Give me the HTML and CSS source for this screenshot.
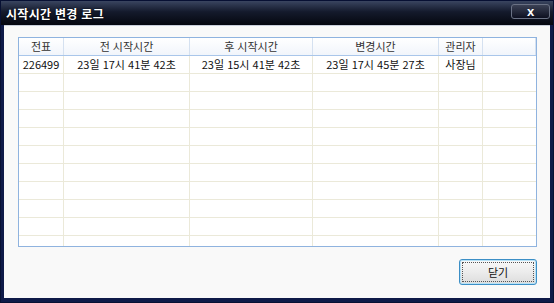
FILE: index.html
```html
<!DOCTYPE html>
<html lang="ko">
<head>
    <meta charset="UTF-8">
    <title>시작시간 변경 로그</title>
    <link rel="stylesheet" href="styles.css">
</head>
<body>
    <div class="window">
        <div class="titlebar">
            <span class="title">시작시간 변경 로그</span>
            <button class="close-btn">x</button>
        </div>

        <div class="client">
            <div class="grid">
                <div class="row head">
                    <div class="cell">전표</div>
                    <div class="cell">전 시작시간</div>
                    <div class="cell">후 시작시간</div>
                    <div class="cell">변경시간</div>
                    <div class="cell">관리자</div>
                    <div class="cell"></div>
                </div>
                <div class="row">
                    <div class="cell">226499</div>
                    <div class="cell">23일 17시 41분 42초</div>
                    <div class="cell">23일 15시 41분 42초</div>
                    <div class="cell">23일 17시 45분 27초</div>
                    <div class="cell">사장님</div>
                    <div class="cell"></div>
                </div>
                <div class="row"><div class="cell"></div><div class="cell"></div><div class="cell"></div><div class="cell"></div><div class="cell"></div><div class="cell"></div></div>
                <div class="row"><div class="cell"></div><div class="cell"></div><div class="cell"></div><div class="cell"></div><div class="cell"></div><div class="cell"></div></div>
                <div class="row"><div class="cell"></div><div class="cell"></div><div class="cell"></div><div class="cell"></div><div class="cell"></div><div class="cell"></div></div>
                <div class="row"><div class="cell"></div><div class="cell"></div><div class="cell"></div><div class="cell"></div><div class="cell"></div><div class="cell"></div></div>
                <div class="row"><div class="cell"></div><div class="cell"></div><div class="cell"></div><div class="cell"></div><div class="cell"></div><div class="cell"></div></div>
                <div class="row"><div class="cell"></div><div class="cell"></div><div class="cell"></div><div class="cell"></div><div class="cell"></div><div class="cell"></div></div>
                <div class="row"><div class="cell"></div><div class="cell"></div><div class="cell"></div><div class="cell"></div><div class="cell"></div><div class="cell"></div></div>
                <div class="row"><div class="cell"></div><div class="cell"></div><div class="cell"></div><div class="cell"></div><div class="cell"></div><div class="cell"></div></div>
                <div class="row"><div class="cell"></div><div class="cell"></div><div class="cell"></div><div class="cell"></div><div class="cell"></div><div class="cell"></div></div>
                <div class="row last"><div class="cell"></div><div class="cell"></div><div class="cell"></div><div class="cell"></div><div class="cell"></div><div class="cell"></div></div>
            </div>

            <div class="actions">
                <button class="btn">닫기</button>
            </div>
        </div>
    </div>
</body>
</html>
```

FILE: styles.css
```css
body {
    margin: 0;
    font-family: "Noto Sans CJK KR", "Liberation Sans", sans-serif;
    font-size: 11px;
    color: #111;
}

.window {
    width: 554px;
    height: 303px;
    box-sizing: border-box;
    background: #0e1a48;
    border: 1px solid #071033;
    display: flex;
    flex-direction: column;
}

.titlebar {
    height: 24px;
    display: flex;
    align-items: center;
    justify-content: space-between;
    padding: 0 3px 0 5px;
    background: linear-gradient(#3a4560, #141a2c 45%, #05070f);
}

.title {
    color: #fff;
    font-weight: bold;
    font-size: 12px;
    letter-spacing: 0.3px;
    text-shadow: 0 0 2px #000;
}

.close-btn {
    width: 39px;
    height: 15px;
    margin-top: -3px;
    padding: 0;
    border: 1px solid #6a7184;
    border-radius: 3px;
    background: linear-gradient(#3b4155, #0d1020);
    color: #fff;
    font-family: "Liberation Sans", sans-serif;
    font-size: 13px;
    font-weight: bold;
    line-height: 11px;
}

.client {
    flex: 1;
    margin: 0 3px 4px 3px;
    background: #f9f9f9;
    border-top: 1px solid #c9cfdb;
    padding: 11px 0 0 14px;
    display: flex;
    flex-direction: column;
}

.grid {
    width: 519px;
    height: 210px;
    box-sizing: border-box;
    border: 1px solid #8fb3df;
    background: #fff;
    overflow: hidden;
}

.row {
    display: grid;
    grid-template-columns: 45px 126px 123px 126px 44px 1fr;
    height: 18px;
    border-bottom: 1px solid #ebe9d9;
    box-sizing: border-box;
}

.row.last {
    border-bottom: none;
}

.row.head {
    height: 18px;
    background: linear-gradient(#ffffff, #f1f5fb);
    border-bottom: 1px solid #a9c6ea;
    color: #333;
}

.cell {
    text-align: center;
    line-height: 17px;
    border-right: 1px solid #ebe9d9;
    white-space: nowrap;
}

.row.head .cell {
    border-right: 1px solid #d5e1f0;
}

.cell:last-child {
    border-right: none;
}

.actions {
    display: flex;
    justify-content: flex-end;
    padding: 12px 13px 0 0;
}

.btn {
    width: 78px;
    height: 26px;
    border: 1px solid #3c8fc6;
    border-radius: 3px;
    background: linear-gradient(#fafafa, #ececec 50%, #dcdcdc);
    box-shadow: inset 0 0 0 1px #b7e2f7;
    font-family: "Noto Sans CJK KR", sans-serif;
    font-size: 11px;
    color: #111;
    outline: 1px dotted #555;
    outline-offset: -4px;
}
```
